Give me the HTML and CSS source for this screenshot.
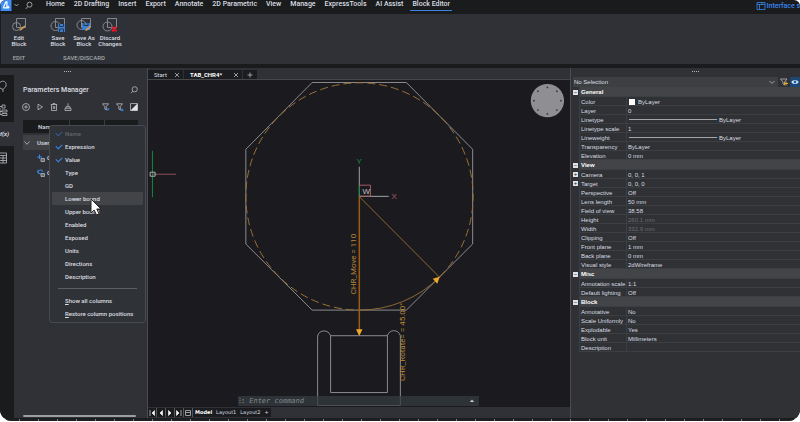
FILE: index.html
```html
<!DOCTYPE html>
<html lang="en">
<head>
<meta charset="utf-8">
<title>Block Editor</title>
<link rel="stylesheet" href="styles.css">
</head>
<body>
<div class="app">
  <header class="topbar">
    <button class="logo" aria-label="Application menu"><svg viewBox="0 0 12 12"><rect width="12" height="12" fill="#3f8cf3"/><path d="M3 8.500 6 2l1 0v6.500M3 8.500h6M8 6.500l1.500 2" fill="none" stroke="#fff" stroke-width="1.300"/></svg></button>
    <button class="caret" aria-label="More"><svg viewBox="0 0 8 8"><path d="M2.500 3 4.500 5l2-2" class="line"/></svg></button>
    <button class="find" aria-label="Search"><svg viewBox="0 0 8 8"><circle cx="4.500" cy="3.200" r="2.500" class="line"/><path d="M2.700 5 .8 7.500" class="line"/></svg></button>
    <nav class="nav">
      <a href="#">Home</a><a href="#">2D Drafting</a><a href="#">Insert</a><a href="#">Export</a><a href="#">Annotate</a><a href="#">2D Parametric</a><a href="#">View</a><a href="#">Manage</a><a href="#">ExpressTools</a><a href="#">AI Assist</a><a href="#" class="current">Block Editor</a>
    </nav>
    <a href="#" class="interface"><svg viewBox="0 0 10 10"><path d="M1 1.500h8v7H1zM1 3.500h8M3.500 3.500v5M6 1.500v2" class="line"/></svg>Interface s</a>
  </header>

  <section class="ribbon">
    <div class="group">
      <div class="tools">
        <button class="tool"><svg viewBox="0 0 16 16"><path d="M5.500 1.500h9v9h-9z" class="dim"/><circle cx="5.500" cy="9.500" r="4" class="dim"/><path d="m8.500 14 1-2.500 4-3 1 1-4 3.500z" fill="#d6a04e"/></svg><span>Edit<br>Block</span></button>
      </div>
      <h2>EDIT</h2>
    </div>
    <div class="group wide">
      <div class="tools">
        <button class="tool"><svg viewBox="0 0 16 16"><path d="M5.500 1.500h9v9h-9z" class="dim"/><circle cx="5.500" cy="9" r="4.500" class="dim"/><path d="M8 7h7v8H8z" fill="#3d7fd0"/><path d="M9.500 7v2.500h4V7M9.500 15v-3h4v3" fill="none" stroke="#26364c"/></svg><span>Save<br>Block</span></button>
        <button class="tool"><svg viewBox="0 0 16 16"><path d="M5.500 1.500h9v9h-9z" class="dim"/><circle cx="5.500" cy="8" r="4.500" class="dim"/><path d="M6 6h8v7H6z" fill="#3d7fd0"/><path d="M8 6v2.500h4V6" fill="none" stroke="#26364c"/><path d="m9 14 1-2 4-3 1 1-4 3.500z" fill="#d6a04e"/></svg><span>Save As<br>Block</span></button>
        <button class="tool"><svg viewBox="0 0 16 16"><path d="M5.500 1.500h9v9h-9z" class="dim"/><circle cx="5.500" cy="9.500" r="4.500" class="dim"/><path d="m10 10 4.500 4.500m0-4.500L10 14.500" fill="none" stroke="#e0182a" stroke-width="1.800"/></svg><span>Discard<br>Changes</span></button>
      </div>
      <h2>SAVE/DISCARD</h2>
    </div>
  </section>

  <main class="work">
    <aside class="rail">
      <button aria-label="Tips"><svg viewBox="0 0 14 14"><path d="M0 2.500C3-.5 7 2 6 6c-.5 2-3 2.500-3 3.500L0 8M3 9.500V12" class="line"/></svg></button>
      <button aria-label="Structure"><svg viewBox="0 0 14 14"><path d="M0 3.500h2M2 2h3v3H2zM0 8.500h2M2 7h5v2H2zM2 10.500h5v2H2zM0 5v6.500h2" class="line"/></svg></button>
      <button aria-label="Parameters" class="active"><i>f(x)</i></button>
      <button aria-label="Blocks"><svg viewBox="0 0 14 14"><path d="M0 2h6.500v10H0M0 4.500h6.500M0 7h6.500M0 9.500h6.500M3 4.500V12" class="line"/></svg></button>
    </aside>

    <section class="params">
      <div class="grip"></div>
      <div class="heading"><h1>Parameters Manager</h1><button class="ico" aria-label="Search parameters"><svg viewBox="0 0 8 8"><circle cx="4.700" cy="3.300" r="2.600" class="line"/><path d="M2.800 5.200 1 7.200" class="line"/></svg></button></div>
      <div class="actions">
        <button class="ico" aria-label="Add"><svg viewBox="0 0 8 8"><circle cx="4" cy="4" r="3.500" class="line"/><path d="M4 2.200v3.600M2.200 4h3.600" class="line"/></svg></button>
        <button class="ico" aria-label="Run"><svg viewBox="0 0 8 8"><path d="M2 1.200 6.500 4 2 6.800z" class="line"/></svg></button>
        <button class="ico" aria-label="Delete"><svg viewBox="0 0 8 8"><path d="M.8 1.500h6.400M3 1.500V.5h2v1M1.500 1.500v6h5v-6M3.300 3v3M4.700 3v3" class="line"/></svg></button>
        <button class="ico" aria-label="Clean"><svg viewBox="0 0 8 8"><path d="M4 .3v3.200M2 3.700h4v1.500M2 3.700v1.500M1 5.300h6v2.200H1z" class="line"/></svg></button>
        <span class="space"></span>
        <button class="ico" aria-label="Filter"><svg viewBox="0 0 8 8"><path d="M.5.800h6L4.300 3.500V7L2.800 6V3.500z" class="line"/><path d="M4.500 5.500h3.200L6 8z" fill="#2f80e8"/></svg></button>
        <button class="ico" aria-label="Filter group"><svg viewBox="0 0 8 8"><path d="M.5.800h6L4.300 3.500V7L2.800 6V3.500z" class="line"/><path d="M4.500 8 6 5l1.800 3z" fill="#2f80e8"/></svg></button>
        <button class="ico" aria-label="Contrast"><svg viewBox="0 0 8 8"><path d="M.5.500h7v7h-7z" class="line"/><path d="M7.500.500v7h-7z" fill="#e4e5e6"/></svg></button>
      </div>
      <div class="columns"><span>Name</span><span>Expression</span><span>Value</span></div>
      <div class="tree">
        <div class="node open"><svg viewBox="0 0 8 8"><path d="M1.500 2.500 4 5.300l2.500-2.800" class="line"/></svg>User</div>
        <div class="node leaf"><svg viewBox="0 0 8 8"><path d="M0 3h5M2.500.500V5" stroke="#3b88e8" fill="none"/><path d="M4 4.500h3.500v3H4zM4 6h3" class="line"/></svg>CHR</div>
        <div class="node leaf"><svg viewBox="0 0 8 8"><path d="M1 4a2.500 2.500 0 1 1 5-1M1 1v3l3 1" stroke="#3b88e8" fill="none"/><path d="M4 4.500h3.500v3H4zM4 6h3" class="line"/></svg>CHR</div>
      </div>
      <div class="scrollbar"></div>

      <div class="menu" role="menu">
        <button role="menuitem" class="checked off" disabled>Name</button>
        <button role="menuitem" class="checked">Expression</button>
        <button role="menuitem" class="checked">Value</button>
        <button role="menuitem">Type</button>
        <button role="menuitem">GD</button>
        <button role="menuitem" class="hover">Lower bound<svg class="pointer" viewBox="0 0 12 18"><path d="M1 1v14l3.200-3 2.300 5 2.500-1.200L6.800 11H11z" fill="#fff" stroke="#222"/></svg></button>
        <button role="menuitem">Upper bound</button>
        <button role="menuitem">Enabled</button>
        <button role="menuitem">Exposed</button>
        <button role="menuitem">Units</button>
        <button role="menuitem">Directions</button>
        <button role="menuitem">Description</button>
        <hr>
        <button role="menuitem"><u>S</u>how all columns</button>
        <button role="menuitem"><u>R</u>estore column positions</button>
      </div>
    </section>

    <section class="editor">
      <div class="filetabs">
        <div class="tab"><a href="#">Start</a><button aria-label="Close Start"><svg viewBox="0 0 6 6"><path d="m1 1 4 4m0-4L1 5" class="line"/></svg></button></div>
        <div class="tab current"><a href="#">TAB_CHR4*</a><button aria-label="Close drawing"><svg viewBox="0 0 6 6"><path d="m1 1 4 4m0-4L1 5" class="line"/></svg></button></div>
        <button class="tab add" aria-label="New drawing"><svg viewBox="0 0 6 6"><path d="M3 .500v5M.500 3h5" class="line"/></svg></button>
      </div>
      <div class="canvas">
        <svg class="drawing" viewBox="148 80 422 328">
          <g fill="none" stroke="#97989c" stroke-width=".9">
            <path d="M312 82.500h94.500L473 149.500v95l-66.500 66.300H312L245.500 244.500v-95z"/>
            <path d="M330.500 336.500h57v57h-57zM317.500 406.500V337c1-7 11-7 13-.5M387.500 336.500c1.500-6.500 11-7 13 0v70h-83"/>
          </g>
          <g fill="none" stroke="#9a7036">
            <path d="M440.500 277A114 114 0 1 0 359.300 310.800" stroke-dasharray="8 4"/>
            <path d="M359.300 310.800A114 114 0 0 0 440 277.500M359.300 197 440 278" stroke-width=".9"/>
          </g>
          <path d="M359.300 197v134" stroke="#9c5a14" stroke-width="1.500"/>
          <path d="M356 330h6.500l-3.200 6.800zM440 277.300l-7 2 4.500 5z" fill="#f0a72c"/>
          <path d="M359.300 167v30M359.300 196.700h29.500" stroke="#a2a3a5" fill="none"/>
          <path d="M359.300 186v11" stroke="#148a3e"/>
          <path d="M359.500 185.500h11v11h-11" stroke="#a35b66" fill="none"/>
          <path d="M151.800 151v46.500" stroke="#128a3f"/><path d="M152 174.500h23.500" stroke="#8a4d59"/><path d="M149.500 172.500h5v4h-5z" stroke="#aeb0b1" fill="none"/>
          <text x="356.500" y="164" class="axis y">Y</text><text x="391.500" y="199.500" class="axis x">X</text><text x="362.500" y="194" class="axis w">W</text>
          <text class="dimtext" transform="translate(356 295) rotate(-90)">CHR_Move = 110</text>
          <text class="dimtext" transform="translate(405 382) rotate(-90)">CHR_Rotate= = 45.00°</text>
          <circle cx="548" cy="100.700" r="16.700" fill="#8f8e93"/>
          <g fill="#3a3a3e"><circle cx="548" cy="87.500" r=".9"/><circle cx="548" cy="114" r=".9"/><circle cx="534.500" cy="100.700" r=".9"/><circle cx="561.500" cy="100.700" r=".9"/><circle cx="538.500" cy="91.300" r=".9"/><circle cx="557.500" cy="91.300" r=".9"/><circle cx="538.500" cy="110.200" r=".9"/><circle cx="557.500" cy="110.200" r=".9"/></g>
        </svg>
        <label class="command"><span>⁝:</span><input type="text" placeholder="Enter command" aria-label="Command"><svg viewBox="0 0 6 6"><path d="M.800 4 3 1.500 5.200 4z" fill="#c4c6c8"/></svg></label>
      </div>
      <div class="layouts">
        <button aria-label="First"><svg viewBox="0 0 8 8"><path d="M2 1v6M6.500 1.500v5L4 4z" class="solid"/></svg></button>
        <button aria-label="Previous"><svg viewBox="0 0 8 8"><path d="M5.500 1.500v5L3 4z" class="solid"/></svg></button>
        <button aria-label="Next"><svg viewBox="0 0 8 8"><path d="M2.500 1.500v5L5 4z" class="solid"/></svg></button>
        <button aria-label="Last"><svg viewBox="0 0 8 8"><path d="M6 1v6M1.500 1.500v5L4 4z" class="solid"/></svg></button>
        <button aria-label="List"><svg viewBox="0 0 8 8"><path d="M1.500 1.500h5v5h-5zM1.500 3.500h5" class="line"/></svg></button>
        <a href="#" class="current">Model</a><a href="#">Layout1</a><a href="#">Layout2</a><a href="#">+</a>
      </div>
    </section>

    <aside class="props">
      <div class="grip"></div>
      <div class="picker">
        <label class="field"><select aria-label="Selection"><option>No Selection</option></select><svg viewBox="0 0 8 8"><path d="m1.500 3 2.500 2.500L6.500 3" class="line"/></svg></label>
        <button aria-label="Quick select"><svg viewBox="0 0 8 8"><path d="M.500 1h6.500L4.500 4v3L3 6V4z" class="line"/><path d="M6 3.500v4M4 5.500h4" stroke="#e8b020" fill="none"/></svg></button>
        <button class="eye" aria-label="Toggle preview"><svg viewBox="0 0 8 8"><path d="M.300 4C2 1.300 6 1.300 7.700 4 6 6.700 2 6.700.300 4z" fill="#d7e9fb"/><circle cx="4" cy="4" r="1.400" fill="#1c5fa8"/></svg></button>
      </div>
      <table>
        <colgroup><col class="c-toggle"><col class="c-name"><col></colgroup>
        <tr class="head"><td><button aria-label="Collapse General">−</button></td><th colspan="2">General</th></tr>
        <tr><td></td><th>Color</th><td><span class="swatch"></span>ByLayer</td></tr>
        <tr><td></td><th>Layer</th><td>0</td></tr>
        <tr><td></td><th>Linetype</th><td><span class="stroke"></span>ByLayer</td></tr>
        <tr><td></td><th>Linetype scale</th><td>1</td></tr>
        <tr><td></td><th>Lineweight</th><td><span class="stroke"></span>ByLayer</td></tr>
        <tr><td></td><th>Transparency</th><td>ByLayer</td></tr>
        <tr><td></td><th>Elevation</th><td>0 mm</td></tr>
        <tr class="head"><td><button aria-label="Collapse View">−</button></td><th colspan="2">View</th></tr>
        <tr><td><button aria-label="Expand Camera">+</button></td><th>Camera</th><td>0, 0, 1</td></tr>
        <tr><td><button aria-label="Expand Target">+</button></td><th>Target</th><td>0, 0, 0</td></tr>
        <tr><td></td><th>Perspective</th><td>Off</td></tr>
        <tr><td></td><th>Lens length</th><td>50 mm</td></tr>
        <tr><td></td><th>Field of view</th><td>38.58</td></tr>
        <tr><td></td><th>Height</th><td class="off">260.1 mm</td></tr>
        <tr><td></td><th>Width</th><td class="off">332.9 mm</td></tr>
        <tr><td></td><th>Clipping</th><td>Off</td></tr>
        <tr><td></td><th>Front plane</th><td>1 mm</td></tr>
        <tr><td></td><th>Back plane</th><td>0 mm</td></tr>
        <tr><td></td><th>Visual style</th><td>2dWireframe</td></tr>
        <tr class="head"><td><button aria-label="Collapse Misc">−</button></td><th colspan="2">Misc</th></tr>
        <tr><td></td><th>Annotation scale</th><td>1:1</td></tr>
        <tr><td></td><th>Default lighting</th><td>Off</td></tr>
        <tr class="head"><td><button aria-label="Collapse Block">−</button></td><th colspan="2">Block</th></tr>
        <tr><td></td><th>Annotative</th><td>No</td></tr>
        <tr><td></td><th>Scale Uniformly</th><td>No</td></tr>
        <tr><td></td><th>Explodable</th><td>Yes</td></tr>
        <tr><td></td><th>Block unit</th><td>Millimeters</td></tr>
        <tr><td></td><th>Description</th><td></td></tr>
      </table>
    </aside>
  </main>
  <footer class="status"></footer>
</div>
</body>
</html>
```

FILE: styles.css
```css
* { box-sizing: border-box; }
html, body { height: 100%; margin: 0; }
body {
  background: #fff;
  color: #dcdee1;
  font: 6px/8px Roboto, sans-serif;
  overflow: hidden;
}
button, select, input {
  margin: 0; padding: 0; border: 0; background: none;
  color: inherit; font: inherit; border-radius: 0;
}
a { color: inherit; text-decoration: none; }
h1, h2 { margin: 0; font-size: 6px; font-weight: 500; }
svg { display: block; flex: none; }
.line { fill: none; stroke: #b9bbbe; stroke-width: .8; }
.dim { fill: none; stroke: #85878b; stroke-width: 1; }
.solid { fill: #fff; stroke: #fff; stroke-width: .6; }

.app {
  height: calc(100vh - 1px);
  display: flex; flex-direction: column;
  background: #191b1d;
  border-radius: 6px 6px 12px 12px;
  overflow: hidden;
}

.topbar { display: flex; align-items: flex-start; height: 14px; flex: none; }
.logo svg { width: 12px; height: 11px; }
.caret svg { width: 8px; height: 10px; }
.find { margin: 1px 0 0 5px; }
.find svg { width: 8px; height: 9px; }
.nav { display: flex; gap: 9px; margin-left: 13px; font-size: 7px; font-weight: 500; line-height: 9px; white-space: nowrap; }
.nav a { height: 11px; }
.nav .current { padding: 0 2px; margin: 0 -2px; border-bottom: 1px solid #3b82e0; }
.interface { display: flex; gap: 1px; align-items: center; margin-left: auto; height: 11px; color: #3a86ee; font-size: 7px; font-weight: 500; white-space: nowrap; }
.interface svg { width: 10px; height: 10px; }
.interface .line { stroke: #3a86ee; }

.ribbon { display: flex; flex: none; height: 50px; margin-left: 1px; background: #303136; border-radius: 2px 0 0 2px; }
.group { display: flex; flex-direction: column; align-items: center; width: 36px; padding-top: 3px; background: #2e3238; }
.group.wide { width: 90px; margin-left: 1px; padding-left: 2px; }
.tools { display: flex; gap: 1px; }
.tool { display: flex; flex-direction: column; align-items: center; width: 25px; line-height: 6px; font-weight: 500; text-align: center; white-space: nowrap; }
.tool svg { width: 16px; height: 16px; margin-bottom: 2px; }
.group h2 { margin-top: 7px; color: #a4a7ab; line-height: 8px; }

.work { display: flex; flex: 1; min-height: 0; margin-top: 4px; background: #303136; }
.rail { width: 14px; flex: none; margin-top: 7px; background: #191b1d; overflow: hidden; }
.rail button { display: block; width: 14px; height: 23px; }
.rail svg { width: 14px; height: 14px; }
.rail .active { background: #303136; margin-top: 1px; height: 24px; font-weight: 700; text-align: left; }

.grip { height: 2px; width: 7px; margin: 3px auto 0; background: repeating-linear-gradient(90deg, #b4b6b9 0 1px, transparent 1px 2px) 0 0 / 100% 1px no-repeat; }
.params { position: relative; display: flex; flex-direction: column; width: 133px; flex: none; padding: 0 9px 0 8px; }
.params .grip { margin-left: 42px; }
.heading { display: flex; justify-content: space-between; align-items: center; height: 12px; margin-top: 11px; padding-left: 1px; }
.heading h1 { font-size: 7px; }
.ico svg { width: 8px; height: 8px; }
.actions { display: flex; gap: 6px; height: 8px; margin: 7px 0 9px; }
.space { flex: 1; }
.columns { display: grid; grid-template-columns: 46px 35px 1fr; height: 13px; margin-left: 1px; background: #191b1d; line-height: 13px; text-align: center; font-weight: 500; }
.columns span + span { border-left: 1px solid #3a3c40; }
.tree { margin: 2px 0 0 1px; }
.node { display: flex; align-items: center; gap: 6px; height: 15px; font-weight: 500; }
.node svg { width: 8px; height: 8px; }
.open { background: #3e4044; }
.leaf { padding-left: 14px; gap: 2px; }
.scrollbar { height: 2px; margin: auto 2px 1px 1px; border-radius: 1px; background: #9a9ea1; }

.menu {
  position: absolute; left: 35px; right: 1px; top: 57px;
  padding: 1px 2px 2px; background: #2f3236;
  border: 1px solid #474a4e; border-radius: 3px;
}
.menu button { position: relative; display: block; width: 100%; height: 13px; padding-left: 13px; border-radius: 1px; text-align: left; line-height: 13px; white-space: nowrap; font-weight: 500; }
.menu .hover { background: #424448; }
.menu .off { color: #63666a; }
.menu .checked::before { content: ""; position: absolute; left: 4px; top: 4px; width: 5px; height: 3px; border: solid #3b88ee; border-width: 0 0 1px 1px; transform: rotate(-45deg); }
.menu .off::before { opacity: .5; }
.menu hr { height: 1px; margin: 5px 6px; border: 0; background: #5b5e62; }
.menu .pointer { position: absolute; left: 38px; top: 6px; width: 12px; height: 18px; z-index: 1; }

.editor { display: flex; flex-direction: column; flex: 1; min-width: 0; border-left: 1px solid #494b4f; }
.filetabs { display: flex; gap: 1px; height: 12px; padding-top: 2px; border-bottom: 1px solid #45474b; }
.tab { display: flex; align-items: center; justify-content: space-between; padding: 0 3px 0 6px; width: 35px; background: #1b1c1f; }
.tab.current { width: 58px; color: #fff; font-weight: 700; }
.tab.add { width: 14px; padding: 0; justify-content: center; }
.tab svg { width: 6px; height: 6px; }
.canvas { position: relative; flex: 1; min-height: 0; background: #1b1b1f; }
.drawing { width: 100%; height: 100%; }
.dimtext { font: 8px Roboto, sans-serif; fill: #b98738; }
.axis { font: 8px "Liberation Sans", sans-serif; }
.axis.y { fill: #168a43; }
.axis.x { fill: #a65a66; }
.axis.w { fill: #bdbec0; }
.command {
  position: absolute; left: 90px; right: 91px; bottom: 1px; height: 10px;
  display: flex; align-items: center; padding: 0 4px 0 1px;
  background: rgba(52, 60, 64, .75); color: #a5a8ab;
  font: 7px/10px "DejaVu Sans Mono", monospace;
}
.command input { flex: 1; min-width: 0; margin-left: 4px; font-style: italic; height: 10px; }
.command input::placeholder { color: #878a8e; opacity: 1; }
.command svg { width: 6px; height: 6px; }
.layouts { display: flex; align-items: center; height: 11px; flex: none; font-family: "DejaVu Sans", sans-serif; }
.layouts button { width: 9px; height: 9px; background: #191b1d; border-right: 1px solid #55575b; }
.layouts svg { width: 8px; height: 8px; }
.layouts a { padding: 0 2px; line-height: 9px; background: #1b1c20; font-size: 5px; }
.layouts .current { color: #fff; font-weight: 700; }

.props { display: flex; flex-direction: column; width: 230px; flex: none; border-left: 1px solid #4a4c50; padding-left: 2px; background: #2f3135; font-family: "Liberation Sans", sans-serif; }
.props .grip { margin-left: 119px; }
.picker { display: flex; gap: 1px; height: 10px; margin: 4px 0 0; }
.field { position: relative; display: flex; flex: 1; background: #3d3f43; }
.field select { flex: 1; padding-left: 1px; appearance: none; line-height: 10px; }
.field svg { position: absolute; right: 2px; top: 1px; pointer-events: none; }
.picker button { width: 10px; padding: 1px; }
.picker svg { width: 8px; height: 8px; }
.picker .eye { background: #1d4674; }

table { width: 100%; table-layout: fixed; border-collapse: collapse; }
.c-toggle { width: 6px; }
.c-name { width: 47px; }
tr { height: 9px; }
tr.head { height: 10px; }
td, th { height: 9px; padding: 0 0 0 2px; line-height: 8px; text-align: left; vertical-align: middle; font-weight: 400; white-space: nowrap; box-shadow: inset 0 -1px #3b3e42, inset 1px 0 #3b3e42; }
tr td:first-child { padding: 0; box-shadow: none; }
tr.head th { height: 10px; background: #424448; color: #fff; font-weight: 700; }
td.off { color: #6b6e72; }
td button { display: block; width: 5px; height: 5px; background: #e1e2e4; color: #222; font-size: 6px; line-height: 5px; text-align: center; }
.swatch { display: inline-block; width: 6px; height: 6px; margin: 0 3px 0 1px; background: #fff; vertical-align: middle; }
.stroke { display: inline-block; width: 88px; height: 1px; margin: 0 2px 0 1px; background: #a4a6a8; vertical-align: middle; }

.status { flex: none; height: 2px; margin-top: 1px; background: repeating-linear-gradient(90deg, #7c7f83 0 1px, #1d1f23 1px 19px); }
```
